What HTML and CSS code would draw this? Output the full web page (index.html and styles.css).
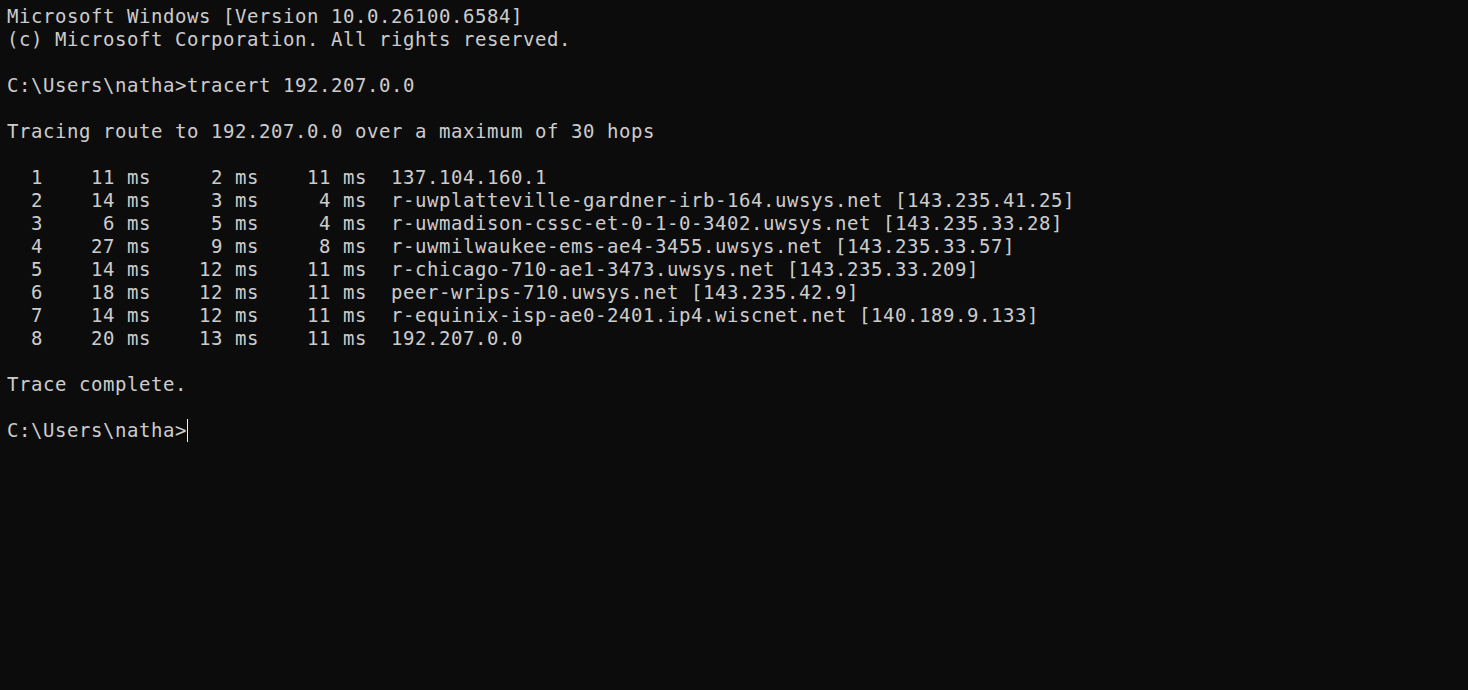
FILE: index.html
```html
<!DOCTYPE html>
<html>
<head>
<meta charset="utf-8">
<link rel="stylesheet" href="styles.css">
</head>
<body>
<pre class="console">Microsoft Windows [Version 10.0.26100.6584]
(c) Microsoft Corporation. All rights reserved.

C:\Users\natha&gt;tracert 192.207.0.0

Tracing route to 192.207.0.0 over a maximum of 30 hops

  1    11 ms     2 ms    11 ms  137.104.160.1
  2    14 ms     3 ms     4 ms  r-uwplatteville-gardner-irb-164.uwsys.net [143.235.41.25]
  3     6 ms     5 ms     4 ms  r-uwmadison-cssc-et-0-1-0-3402.uwsys.net [143.235.33.28]
  4    27 ms     9 ms     8 ms  r-uwmilwaukee-ems-ae4-3455.uwsys.net [143.235.33.57]
  5    14 ms    12 ms    11 ms  r-chicago-710-ae1-3473.uwsys.net [143.235.33.209]
  6    18 ms    12 ms    11 ms  peer-wrips-710.uwsys.net [143.235.42.9]
  7    14 ms    12 ms    11 ms  r-equinix-isp-ae0-2401.ip4.wiscnet.net [140.189.9.133]
  8    20 ms    13 ms    11 ms  192.207.0.0

Trace complete.

C:\Users\natha&gt;<span class="cursor"></span></pre>
</body>
</html>
```

FILE: styles.css
```css
html, body {
  margin: 0;
  padding: 0;
  background: #0c0c0c;
  height: 100%;
}
.console {
  margin: 0;
  padding: 5px 7px;
  font-family: "DejaVu Sans Mono", monospace;
  font-size: 19px;
  letter-spacing: 0.56px;
  line-height: 23px;
  color: #cccccc;
  white-space: pre;
}
.cursor {
  display: inline-block;
  width: 1px;
  height: 23px;
  background: #f0f0f0;
  vertical-align: top;
}
```
